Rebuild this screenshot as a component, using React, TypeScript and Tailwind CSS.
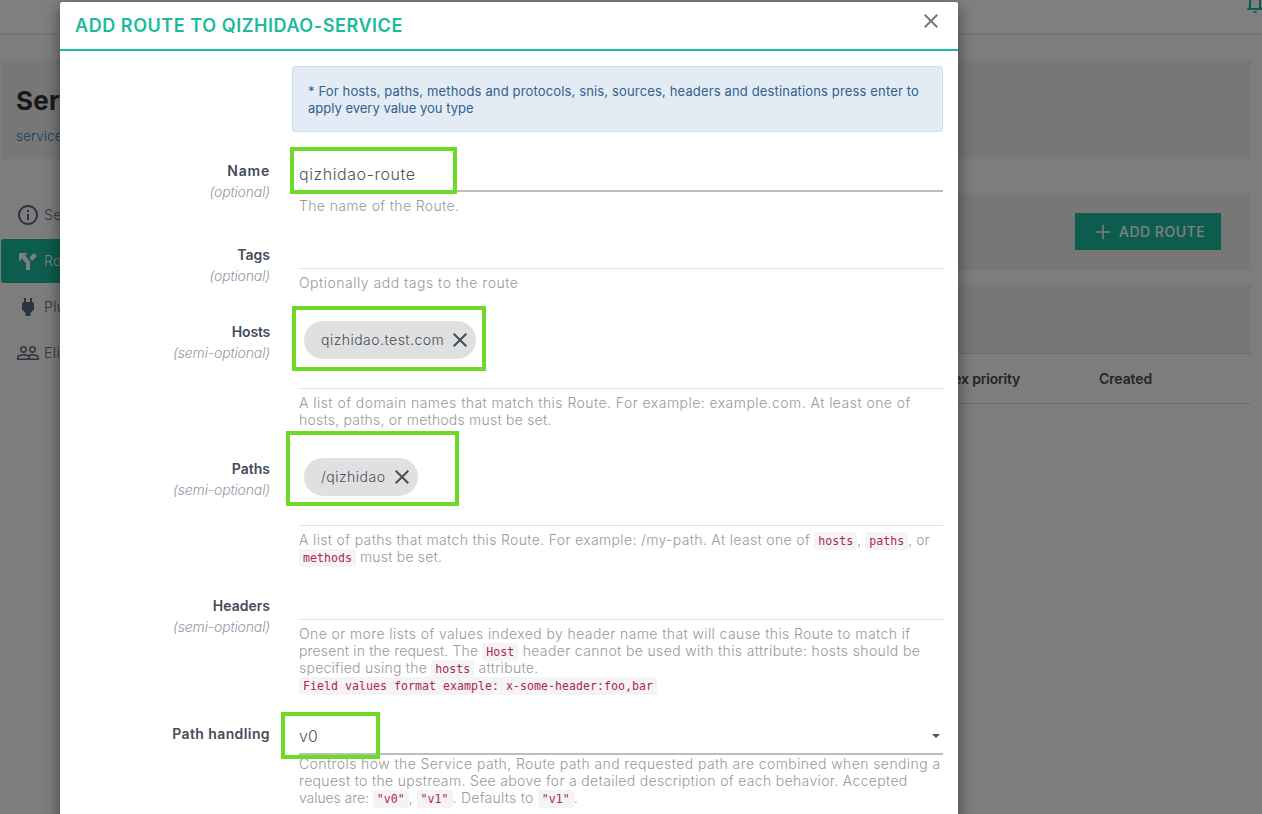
import type { ReactNode } from "react";
import { MdInfoOutline, MdNotificationsNone, MdPeopleOutline } from "react-icons/md";

function ForkIcon() {
  return (
    <svg viewBox="0 0 24 24" className="size-6 shrink-0" fill="currentColor">
      <path d="M3,4V12.5L6,9.5L9,13C10,14 10,15 10,15V21H14V14C14,14 14,13 13.47,12C12.94,11 12,10 12,10L9,6.58L11.5,4M18,4L13.54,8.47L14,9C14,9 14.93,10 15.47,11C15.68,11.4 15.8,11.79 15.87,12.13L21,7" />
    </svg>
  );
}

function PlugIcon() {
  return (
    <svg viewBox="0 0 24 24" className="size-6 shrink-0" fill="currentColor">
      <path d="M16,7V3H14V7H10V3H8V7C7,7 6,8 6,9V14.5L9.5,18V21H14.5V18L18,14.5V9C18,8 17,7 16,7Z" />
    </svg>
  );
}

function Cross({ className }: { className: string }) {
  return (
    <svg viewBox="0 0 14 14" className={className} fill="none" stroke="currentColor" strokeWidth="2">
      <path d="M0.7,0.7L13.3,13.3M13.3,0.7L0.7,13.3" />
    </svg>
  );
}

function NavItem({ icon, label, active }: { icon: ReactNode; label: string; active?: boolean }) {
  return (
    <div
      className={
        active
          ? "flex h-11 items-center gap-1 rounded-[3px] bg-[#1abb9c] pl-[15px] text-white"
          : "flex h-11 items-center gap-1 pl-[15px] text-[#5a738e]"
      }
    >
      <span className={active ? "flex" : "flex text-[#55677f]"}>{icon}</span>
      <span className="text-sm font-light tracking-[0.4px] whitespace-nowrap">{label}</span>
    </div>
  );
}

function Page() {
  return (
    <div className="flex h-[814px] flex-col bg-[#fafafa]">
      <header className="flex h-[35px] shrink-0 justify-end overflow-hidden border-b-2 border-[#eeeeee] bg-white">
        <MdNotificationsNone className="-mt-[9px] -mr-[5px] size-6 shrink-0 text-[#1abb9c]" />
      </header>
      <section className="mt-[25px] mr-[11px] ml-px h-[99px] shrink-0 bg-[#eeeeee] pl-[15px]">
        <h1 className="pt-[23px] text-[26px] leading-9 font-bold tracking-[0.3px] text-[#333333]">Service</h1>
        <p className="pt-[7px] text-[13.5px] leading-5 font-light tracking-[0.1px] text-[#337ab7]">services</p>
      </section>
      <div className="flex grow pt-[34px] pr-[11px] pl-px">
        <nav className="flex w-[230px] flex-col gap-0.5 overflow-hidden">
          <NavItem icon={<MdInfoOutline className="size-6" />} label="Service Details" />
          <NavItem icon={<ForkIcon />} label="Routes" active />
          <NavItem icon={<PlugIcon />} label="Plugins" />
          <NavItem icon={<MdPeopleOutline className="size-6" />} label="Eligible consumers" />
        </nav>
        <main className="flex grow flex-col gap-[15px]">
          <div className="flex h-[77px] items-center justify-end bg-[#eeeeee] pr-[30px]">
            <button className="flex h-[37px] w-[146px] items-center bg-[#1abb9c] pl-[21px] text-white">
              <svg viewBox="0 0 14 14" className="mr-[9px] size-3.5" fill="none" stroke="currentColor" strokeWidth="1.5">
                <path d="M7,0V14M0,7H14" />
              </svg>
              <span className="text-sm font-medium tracking-[0.5px] whitespace-nowrap">ADD ROUTE</span>
            </button>
          </div>
          <div>
            <div className="h-[69px] border-b border-[#d8d8d8] bg-[#eeeeee]" />
            <div className="flex h-[50px] items-center justify-end border-b border-[#dddddd] text-sm font-semibold text-[#454c56]">
              <span className="mr-[79px] w-[99px] text-right tracking-[-0.2px] whitespace-nowrap">Regex priority</span>
              <span className="w-[152px] tracking-[-0.1px]">Created</span>
            </div>
          </div>
        </main>
      </div>
    </div>
  );
}

function Code({ children }: { children: ReactNode }) {
  return (
    <code className="rounded-[3px] bg-[#f4f4f4] px-1 py-[2px] font-['DejaVu_Sans_Mono',monospace] text-[11.6px] leading-none tracking-[0.02px] text-[#b0264f]">
      {children}
    </code>
  );
}

type FieldProps = {
  label: string;
  labelSpacing?: string;
  hint?: string;
  height: string;
  control: ReactNode;
  children: ReactNode;
};

function Field({ label, labelSpacing = "", hint, height, control, children }: FieldProps) {
  return (
    <div className={`flex shrink-0 ${height}`}>
      <div className="w-[210px] shrink-0 text-right text-sm">
        <div className={`h-5 leading-5 font-semibold text-[#454c5a] ${labelSpacing}`}>{label}</div>
        {hint && <div className="leading-[21px] font-light tracking-[-0.15px] text-[#8f99a6] italic">{hint}</div>}
      </div>
      <div className="ml-[29px] w-[644px]">
        {control}
        <div className="text-sm leading-[17px] font-light whitespace-nowrap text-[#999999] *:[code]:align-baseline">{children}</div>
      </div>
    </div>
  );
}

function Chip({ width, children }: { width: string; children: ReactNode }) {
  return (
    <div className={`mt-[-1px] ml-[5px] flex h-[38px] items-center justify-between rounded-full bg-[#e0e0e0] pr-[9px] pl-[17px] text-sm text-[#424f5f] ${width}`}>
      <span className="font-light tracking-[0.48px]">{children}</span>
      <Cross className="size-3.5" />
    </div>
  );
}

export default function App() {
  return (
    <div className="relative h-[814px] w-[1262px] overflow-hidden font-['Inter',sans-serif]">
      <Page />
      <div className="absolute inset-0 bg-black/50" />
      <div className="absolute top-[2px] left-[60px] flex h-[900px] w-[898px] flex-col rounded-t-[2px] bg-white shadow-[0_5px_15px_rgba(0,0,0,0.5)]">
        <header className="flex h-[49px] shrink-0 items-center justify-between border-b-2 border-[#1abb9c] pr-5 pl-[15px]">
          <h2 className="text-[18px] font-semibold tracking-[0.56px] whitespace-nowrap text-[#1abb9c]">ADD ROUTE TO QIZHIDAO-SERVICE</h2>
          <Cross className="mb-2.5 size-3.5 text-[#777777]" />
        </header>
        <div className="mt-[15px] mb-[29px] ml-[232px] h-[66px] w-[651px] shrink-0 rounded-[3px] border border-[#c9dfec] bg-[#e3ebf5] px-[15px] pt-4 text-[13px] leading-[17px] whitespace-nowrap text-[#31618f]">
          <span className="tracking-[0.15px]">
            * For hosts, paths, methods and protocols, snis, sources, headers and destinations press enter to
          </span>
          <br />
          apply every value you type
        </div>
        <Field
          label="Name"
          labelSpacing="tracking-[0.8px]"
          hint="(optional)"
          height="h-[84px]"
          control={
            <div className="mb-[5px] h-[31px] border-b-2 border-[#bdbdbd] pt-px text-base leading-6 font-light tracking-[0.57px] text-[#555555]">
              qizhidao-route
            </div>
          }
        >
          <span className="tracking-[0.36px]">The name of the Route.</span>
        </Field>
        <Field label="Tags" hint="(optional)" height="h-[77px]" control={<div className="mb-[5px] h-6 border-b border-[#e0e0e0]" />}>
          <span className="tracking-[0.5px]">Optionally add tags to the route</span>
        </Field>
        <Field
          label="Hosts"
          labelSpacing="tracking-[-0.2px]"
          hint="(semi-optional)"
          height="h-[137px]"
          control={
            <div className="mb-[5px] flex h-[67px] items-start border-b border-[#e0e0e0]">
              <Chip width="w-[172px]">qizhidao.test.com</Chip>
            </div>
          }
        >
          <span className="tracking-[0.45px]">
            A list of domain names that match this Route. For example: example.com. At least one of
          </span>
          <br />
          <span className="tracking-[0.22px]">hosts, paths, or methods must be set.</span>
        </Field>
        <Field
          label="Paths"
          hint="(semi-optional)"
          height="h-[137px]"
          control={
            <div className="mb-[5px] flex h-[67px] items-start border-b border-[#e0e0e0]">
              <Chip width="w-[114px]">/qizhidao</Chip>
            </div>
          }
        >
          <span className="tracking-[0.34px]">
            A list of paths that match this Route. For example: /my-path. At least one of{" "}
          </span>
          <Code>hosts</Code>, <Code>paths</Code>, or
          <br />
          <Code>methods</Code> <span className="tracking-[0.2px]">must be set.</span>
        </Field>
        <Field label="Headers" hint="(semi-optional)" height="h-[128px]" control={<div className="mb-[5px] h-6 border-b border-[#e0e0e0]" />}>
          <span className="tracking-[0.4px]">
            One or more lists of values indexed by header name that will cause this Route to match if
          </span>
          <br />
          <span className="tracking-[0.15px]">present in the request. The </span>
          <Code>Host</Code>
          <span className="tracking-[0.36px]"> header cannot be used with this attribute: hosts should be</span>
          <br />
          <span className="tracking-[0.25px]">specified using the </span>
          <Code>hosts</Code>
          <span className="tracking-[0.3px]"> attribute.</span>
          <br />
          <Code>Field values format example: x-some-header:foo,bar</Code>
        </Field>
        <Field
          label="Path handling"
          labelSpacing="tracking-[0.4px]"
          height="h-[110px]"
          control={
            <div className="flex h-[31px] items-start justify-between border-b-2 border-[#bdbdbd] text-base leading-6 font-light text-[#555555]">
              <span>v0</span>
              <svg viewBox="0 0 8 4" className="mt-[10px] mr-[3px] h-1 w-2" fill="#555555">
                <path d="M0,0H8L4,4Z" />
              </svg>
            </div>
          }
        >
          <span className="tracking-[0.41px]">
            Controls how the Service path, Route path and requested path are combined when sending a
          </span>
          <br />
          <span className="tracking-[0.33px]">
            request to the upstream. See above for a detailed description of each behavior. Accepted
          </span>
          <br />
          <span className="tracking-[-0.08px]">values are: </span>
          <Code>"v0"</Code>, <Code>"v1"</Code>
          <span className="tracking-[0.25px]">. Defaults to </span>
          <Code>"v1"</Code>.
        </Field>
      </div>
      <div className="absolute top-[147px] left-[290px] h-[47px] w-[167px] border-4 border-[#6fd928]" />
      <div className="absolute top-[306px] left-[292px] h-[65px] w-[194px] border-4 border-[#6fd928]" />
      <div className="absolute top-[431px] left-[286px] h-[75px] w-[173px] border-4 border-[#6fd928]" />
      <div className="absolute top-[712px] left-[281px] h-[47px] w-[99px] border-4 border-[#6fd928]" />
    </div>
  );
}
